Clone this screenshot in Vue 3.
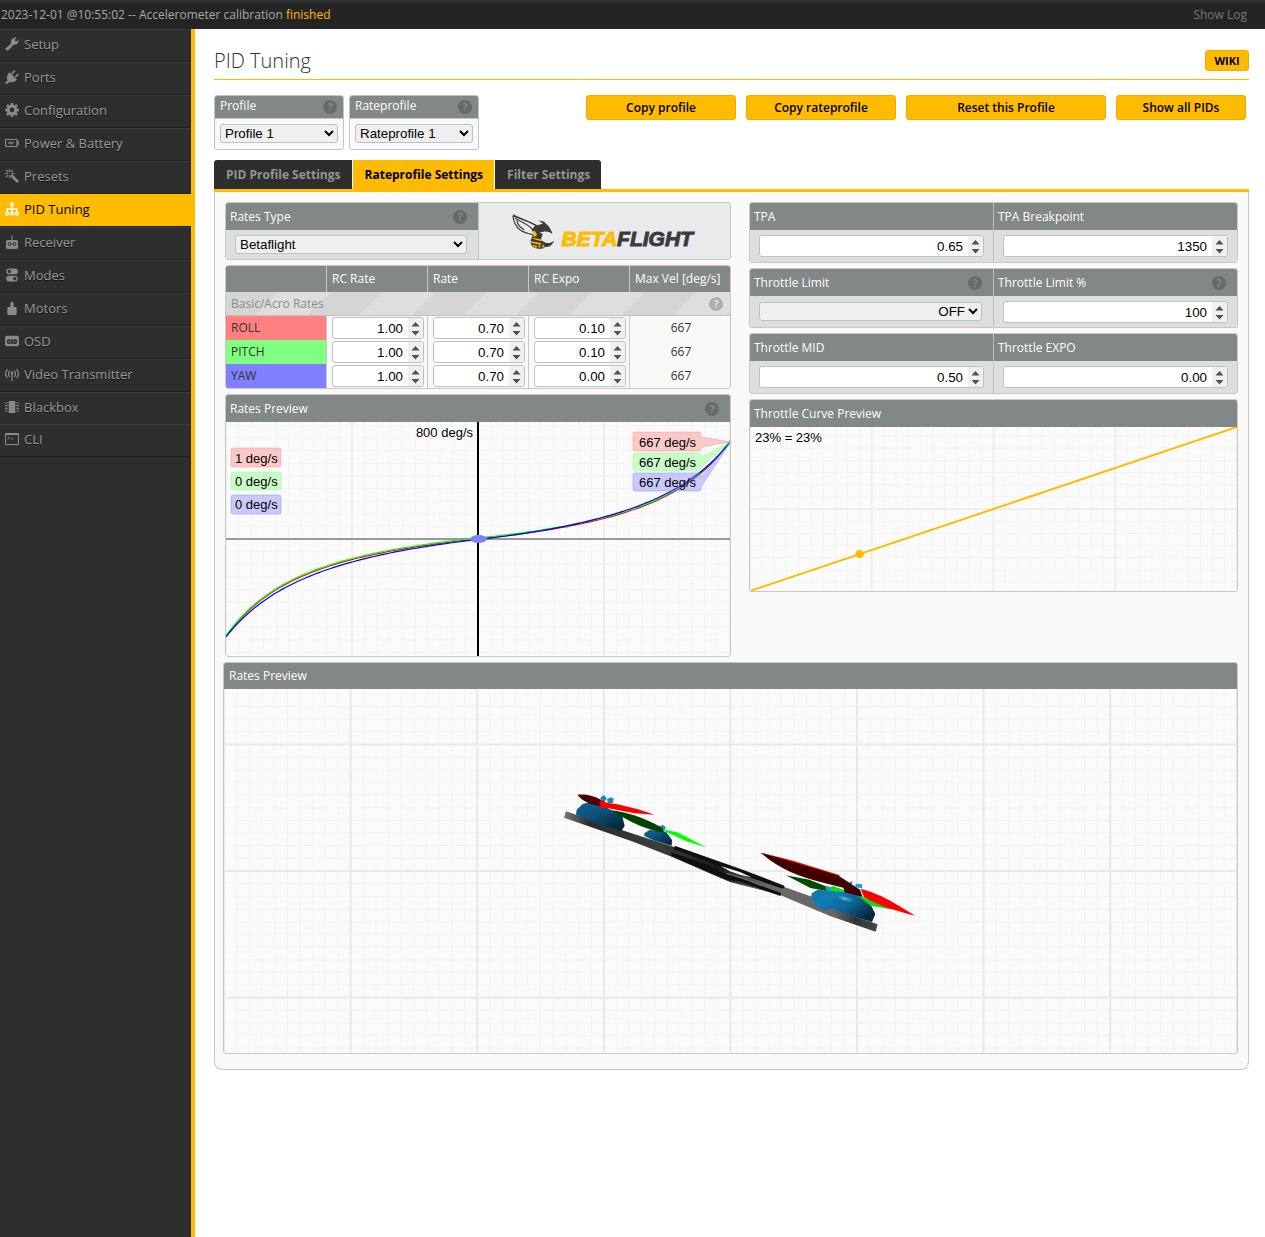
<script setup>
import { ref } from 'vue'

const nav = [
  { id: 'setup', label: 'Setup' },
  { id: 'ports', label: 'Ports' },
  { id: 'config', label: 'Configuration' },
  { id: 'power', label: 'Power & Battery' },
  { id: 'presets', label: 'Presets' },
  { id: 'pid', label: 'PID Tuning' },
  { id: 'receiver', label: 'Receiver' },
  { id: 'modes', label: 'Modes' },
  { id: 'motors', label: 'Motors' },
  { id: 'osd', label: 'OSD' },
  { id: 'vtx', label: 'Video Transmitter' },
  { id: 'blackbox', label: 'Blackbox' },
  { id: 'cli', label: 'CLI' },
]
const activeNav = ref('pid')

const tabs = ['PID Profile Settings', 'Rateprofile Settings', 'Filter Settings']
const activeTab = ref(1)

const axes = ref([
  { name: 'ROLL', cls: 'roll', rc: '1.00', rate: '0.70', expo: '0.10', max: 667 },
  { name: 'PITCH', cls: 'pitch', rc: '1.00', rate: '0.70', expo: '0.10', max: 667 },
  { name: 'YAW', cls: 'yaw', rc: '1.00', rate: '0.70', expo: '0.00', max: 667 },
])

const throttleRows = ref([
  [
    { id: 'tpa', label: 'TPA', value: '0.65', step: '0.01' },
    { id: 'tpa-breakpoint', label: 'TPA Breakpoint', value: '1350', step: '10' },
  ],
  [
    { id: 'throttle-limit', label: 'Throttle Limit', options: ['OFF', 'SCALE', 'CLIP'], value: 'OFF', help: true },
    { id: 'throttle-limit-pct', label: 'Throttle Limit %', value: '100', step: '1', help: true },
  ],
  [
    { id: 'throttle-mid', label: 'Throttle MID', value: '0.50', step: '0.01' },
    { id: 'throttle-expo', label: 'Throttle EXPO', value: '0.00', step: '0.01' },
  ],
])

// Stick deflection (-1..1) to angular velocity in deg/s
function velocity(stick, rcRate, rate, expo) {
  const a = Math.abs(stick)
  const c = stick * a ** 3 * expo + stick * (1 - expo)
  return (200 * rcRate * c) / (1 - a * rate)
}
function curve(axis, shift) {
  const pts = []
  for (let i = 0; i <= 126; i++) {
    const s = (i / 126) * 2 - 1
    const v = velocity(s, +axis.rc, +axis.rate, +axis.expo)
    pts.push(`${i * 4},${(117 - (v / 800) * 117 + shift).toFixed(1)}`)
  }
  return pts.join(' ')
}
</script>

<template>
  <div class="app">
    <header class="log">
      <span>2023-12-01 @10:55:02 -- Accelerometer calibration <em>finished</em></span>
      <a href="#" class="show-log">Show Log</a>
    </header>

    <div class="main">
      <nav class="sidebar">
        <ul>
          <li v-for="n in nav" :key="n.id">
            <a href="#" :class="{ active: n.id === activeNav }" @click.prevent="activeNav = n.id">
              <svg class="icon" viewBox="0 0 14 14" aria-hidden="true">
                <path v-if="n.id === 'setup'" fill="currentColor" d="M.7 11.200 6 6.400C5.300 3.600 7.300.700 10.500.2l1.200.2-1.900 2.300.3 1.300 1.500.4L13.700 2.300c.6 3.200-1.900 6-5 5.400L3.300 13.200c-1.200 1-3.600-.9-2.600-2z" />
                <g v-else-if="n.id === 'ports'">
                  <path d="M6.800 3.800 9.800.7M10.200 7.200l3.200-3.200M.5 13.400l3-2.600" stroke="currentColor" stroke-width="1.700" fill="none" />
                  <path fill="currentColor" d="m4.600 2.200 7.200 7.200c-1.800 2.400-4.700 3.400-7.500 2.300L2.300 10.200C1.300 7.400 2.200 4 4.600 2.200zM1 12l3-1 .6 1.500L2 13.800z" />
                </g>
                <g v-else-if="n.id === 'config'">
                  <circle cx="7" cy="7" r="3.900" fill="none" stroke="currentColor" stroke-width="3" />
                  <path d="M7 0v2M7 12v2M0 7h2M12 7h2M2 2l1.500 1.500M10.500 10.500 12 12M2 12l1.500-1.500M10.500 3.500 12 2" stroke="currentColor" stroke-width="2.600" />
                </g>
                <g v-else-if="n.id === 'power'" fill="none" stroke="currentColor">
                  <path d="M.5 3.500h11.500v7H.5z" stroke-width="1.200" />
                  <path d="M13.200 5v4" stroke-width="1.500" />
                  <path d="m3 7.500 2.500-1.500 1 2L8.500 6" stroke-width="1.200" />
                </g>
                <g v-else-if="n.id === 'presets'" stroke="currentColor" fill="none">
                  <path d="m6 6 7 7" stroke-width="2.600" />
                  <path d="M4.500 0v3.200M0 4.500h3.200M1 1l2.200 2.200M8 1 6 3M1 8l2.200-2.200M9.500 4.500H6.500M4.500 9V6.500" stroke-width="1.100" />
                </g>
                <g v-else-if="n.id === 'pid'" stroke="currentColor" fill="none" stroke-width="1.400">
                  <circle cx="7" cy="2.200" r="1.500" />
                  <circle cx="2.200" cy="11.600" r="1.500" /><circle cx="7" cy="11.600" r="1.500" /><circle cx="11.800" cy="11.600" r="1.500" />
                  <path d="M7 3.700v6.400M2.200 10V7h9.600v3" />
                </g>
                <g v-else-if="n.id === 'receiver'">
                  <path fill="currentColor" d="M6.500 0h1v5h4.500l1 1.500V13l-1 1H2l-1-1V6.500L2 5h4.500z" />
                  <circle cx="4.500" cy="9" r="1.500" fill="currentColor" stroke="#2e2e2e" /><circle cx="9.500" cy="9" r="1.500" fill="currentColor" stroke="#2e2e2e" />
                </g>
                <g v-else-if="n.id === 'modes'">
                  <rect x="1.200" y=".5" width="11.600" height="5.800" rx="2.900" fill="currentColor" /><rect x="1.200" y="7.700" width="11.600" height="5.800" rx="2.900" fill="currentColor" />
                  <circle cx="4.300" cy="3.400" r="1.700" fill="#2e2e2e" /><circle cx="9.700" cy="10.600" r="1.700" fill="#2e2e2e" />
                </g>
                <path v-else-if="n.id === 'motors'" fill="currentColor" d="m7 0 1.700 2.500V6H11l.6.6v6.800l-.6.6H3l-.6-.6V6.600L3 6h2.300V2.500z" />
                <g v-else-if="n.id === 'osd'">
                  <rect y="1.800" width="14" height="10.400" rx="2" fill="currentColor" />
                  <text x="7" y="8.800" font-size="5" font-weight="700" text-anchor="middle" fill="#2e2e2e">OSD</text>
                </g>
                <g v-else-if="n.id === 'vtx'" stroke="currentColor" fill="none" stroke-width="1.200">
                  <path d="M2.500 2.200c-2.400 2.800-2.400 6.200 0 9M11.500 2.200c2.400 2.800 2.400 6.200 0 9M4.700 3.500c-1.500 2-1.500 4.400 0 6.400M9.300 3.500c1.500 2 1.500 4.400 0 6.400M7 6.500V14" />
                  <circle cx="7" cy="6" r=".8" />
                </g>
                <g v-else-if="n.id === 'blackbox'">
                  <path fill="currentColor" d="M3.700 1h6.600v12H3.700z" />
                  <path d="M0 3h2.600M0 5.700h2.600M0 8.400h2.600M0 11h2.600M11.400 3H14M11.400 5.700H14M11.400 8.400H14M11.400 11H14" stroke="currentColor" stroke-width="1.200" />
                </g>
                <g v-else stroke="currentColor" fill="none">
                  <path d="M.5 1.500h13v11H.5z" /><path d="M.5 2.500h13" />
                  <path d="m2.500 4.500 2 1.300-2 1.300M5.500 7h2.500" stroke-width=".8" />
                </g>
              </svg>
              <span>{{ n.label }}</span>
            </a>
          </li>
        </ul>
      </nav>

      <main class="content">
        <div class="title-row">
          <h1>PID Tuning</h1>
          <button type="button" class="wiki">WIKI</button>
        </div>

        <div class="toolbar">
          <div class="selector">
            <div class="head"><label for="profile">Profile</label><span class="help">?</span></div>
            <div class="selector-body"><select id="profile"><option>Profile 1</option><option>Profile 2</option><option>Profile 3</option></select></div>
          </div>
          <div class="selector">
            <div class="head"><label for="rateprofile">Rateprofile</label><span class="help">?</span></div>
            <div class="selector-body"><select id="rateprofile"><option>Rateprofile 1</option><option>Rateprofile 2</option></select></div>
          </div>
          <div class="actions">
            <button type="button">Copy profile</button>
            <button type="button">Copy rateprofile</button>
            <button type="button" class="wide">Reset this Profile</button>
            <button type="button" class="narrow">Show all PIDs</button>
          </div>
        </div>

        <div class="tabs" role="tablist">
          <button v-for="(t, i) in tabs" :key="t" type="button" role="tab" :aria-selected="i === activeTab" :class="{ active: i === activeTab }" @click="activeTab = i">{{ t }}</button>
        </div>

        <section class="panel">
          <div class="columns">
            <div class="left">
              <div class="box split">
                <div class="cell">
                  <div class="head"><label for="rates-type">Rates Type</label><span class="help inset">?</span></div>
                  <div class="cell-body rates-type"><select id="rates-type"><option>Betaflight</option><option>Raceflight</option><option>KISS</option><option>Actual</option><option>Quick</option></select></div>
                </div>
                <div class="cell logo">
                  <svg viewBox="0 0 250 56" role="img" aria-label="Betaflight">
                    <g transform="translate(-4 -8) scale(.33333)">
                      <g fill="none" stroke="#3c3c3b" stroke-width="3.500" stroke-linejoin="round">
                        <path d="M112 62c15 7 45 14 72 30M112 62c2 18 10 34 22 43M118 70c18 10 38 16 52 32M134 105c12 8 24 11 38 14M124 76c2 12 10 22 22 28" />
                      </g>
                      <path fill="#3c3c3b" d="m112 58 44 19 28 14 18-5c-4-5-8-7-14-9 14 0 20 3 24 10 8 5 14 14 19 30-10-7-18-9-30-6-10 3-18 2-25 7l-8-14 11-12-21-10-44-18z" />
                      <path fill="#3c3c3b" d="m172 120 16-10 14 8-6 15c10 12 24 16 40 4-6 14-15 20-28 19 0 4-10 6-20 5-18-2-25-12-22-26z" />
                      <path fill="#ffbb00" d="m170 110 8-3 7 12-9 8zM172 128l28 6-2 5-24-7zM166 139l32 6-4 4-29-6zM168 149l18 4-5 6zM188 153l8-3-4 10zM202 147l6 9-8 2z" />
                    </g>
                    <text x="82" y="43" class="brand"><tspan fill="#ffbb00" stroke="#ffbb00">BETA</tspan><tspan fill="#3c3c3b" stroke="#3c3c3b">FLIGHT</tspan></text>
                  </svg>
                </div>
              </div>

              <div class="box">
                <table class="rates">
                  <thead>
                    <tr><th class="axis"></th><th>RC Rate</th><th>Rate</th><th>RC Expo</th><th>Max Vel [deg/s]</th></tr>
                  </thead>
                  <tbody>
                    <tr><td colspan="5" class="group"><div><span>Basic/Acro Rates</span><span class="help light">?</span></div></td></tr>
                    <tr v-for="a in axes" :key="a.name">
                      <th scope="row" :class="a.cls">{{ a.name }}</th>
                      <td><input v-model="a.rc" type="number" step="0.01" :aria-label="a.name + ' RC Rate'" /></td>
                      <td><input v-model="a.rate" type="number" step="0.01" :aria-label="a.name + ' Rate'" /></td>
                      <td><input v-model="a.expo" type="number" step="0.01" :aria-label="a.name + ' RC Expo'" /></td>
                      <td class="max">{{ a.max }}</td>
                    </tr>
                  </tbody>
                </table>
              </div>

              <div class="box">
                <div class="head"><span>Rates Preview</span><span class="help inset">?</span></div>
                <svg class="plot" viewBox="0 0 504 234">
                  <defs>
                    <pattern id="g1" width="126" height="126" patternUnits="userSpaceOnUse" patternTransform="translate(0 -9)">
                      <path v-for="i in 9" :key="i" :d="`M${i * 12.6} 0V126M0 ${i * 12.6}H126`" stroke="#f3f3f3" />
                      <path d="M0 0V126M0 0H126M126 0V126M0 126H126" stroke="#eee" stroke-width="2" />
                    </pattern>
                  </defs>
                  <rect width="504" height="234" fill="url(#g1)" />
                  <path d="M0 117H504" stroke="#999" stroke-width="2" />
                  <path d="M252 0V234" stroke="#000" stroke-width="2" />
                  <g fill="none" stroke-width="1.200">
                    <polyline :points="curve(axes[0], 0)" stroke="#f00" />
                    <polyline :points="curve(axes[1], -1)" stroke="#0f0" />
                    <polyline :points="curve(axes[2], 0.500)" stroke="#00f" />
                  </g>
                  <ellipse cx="252.500" cy="117" rx="8.500" ry="4" fill="#8080ff" />
                  <g class="tag-red">
                    <rect x="5" y="26" width="50" height="19" rx="2" />
                    <path d="M409 10h64q2 0 2 2v3l29 5-29 5v2q0 2-2 2h-64q-2 0-2-2V12q0-2 2-2z" />
                  </g>
                  <g class="tag-green">
                    <rect x="5" y="50" width="50" height="18" rx="2" />
                    <path d="M409 31h64q2 0 2 2v2l29-15-29 25v2q0 2-2 2h-64q-2 0-2-2V33q0-2 2-2z" />
                  </g>
                  <g class="tag-blue">
                    <rect x="5" y="73" width="50" height="19" rx="2" />
                    <path d="M409 51h64q2 0 2 2v2l29-34-29 44v2q0 2-2 2h-64q-2 0-2-2V53q0-2 2-2z" />
                  </g>
                  <g class="plot-text">
                    <text x="247" y="15" text-anchor="end">800 deg/s</text>
                    <text x="9" y="41">1 deg/s</text>
                    <text x="9" y="64">0 deg/s</text>
                    <text x="9" y="87">0 deg/s</text>
                    <text x="413" y="25">667 deg/s</text>
                    <text x="413" y="45">667 deg/s</text>
                    <text x="413" y="65">667 deg/s</text>
                  </g>
                </svg>
              </div>
            </div>

            <div class="right">
              <div v-for="(row, r) in throttleRows" :key="r" class="box split">
                <div v-for="f in row" :key="f.id" class="cell">
                  <div class="head"><label :for="f.id">{{ f.label }}</label><span v-if="f.help" class="help inset">?</span></div>
                  <div class="cell-body" :class="{ short: f.help }">
                    <select v-if="f.options" :id="f.id" v-model="f.value" class="end"><option v-for="o in f.options" :key="o">{{ o }}</option></select>
                    <input v-else :id="f.id" v-model="f.value" type="number" :step="f.step" />
                  </div>
                </div>
              </div>

              <div class="box">
                <div class="head"><span>Throttle Curve Preview</span></div>
                <svg class="plot" viewBox="0 0 487 164">
                  <defs>
                    <pattern id="g2" width="121.750" height="121.750" patternUnits="userSpaceOnUse" patternTransform="translate(0 -39.750)">
                      <path v-for="i in 9" :key="i" :d="`M${i * 12.175} 0V122M0 ${i * 12.175}H122`" stroke="#f3f3f3" />
                      <path d="M0 0V122M0 0H122M121.750 0V122M0 121.750H122" stroke="#eee" stroke-width="2" />
                    </pattern>
                  </defs>
                  <rect width="487" height="164" fill="url(#g2)" />
                  <path d="M0 164 487 0" stroke="#ffbb00" stroke-width="2" />
                  <circle cx="109.500" cy="127" r="4" fill="#ffbb00" />
                  <text x="5" y="15" class="plot-text">23% = 23%</text>
                </svg>
              </div>
            </div>
          </div>

          <div class="box model">
            <div class="head"><span>Rates Preview</span></div>
            <svg class="plot" viewBox="0 0 1013 364">
              <defs>
                <pattern id="g3" width="126.600" height="126.600" patternUnits="userSpaceOnUse" patternTransform="translate(0 55.400)">
                  <path v-for="i in 9" :key="i" :d="`M${i * 12.66} 0V127M0 ${i * 12.66}H127`" stroke="#f3f3f3" />
                  <path d="M0 0V127M0 0H127M126.600 0V127M0 126.600H127" stroke="#e9e9e9" stroke-width="2" />
                </pattern>
                <linearGradient id="beam" x1="0" x2="1"><stop offset="0" stop-color="#777" /><stop offset=".08" stop-color="#2c2c2c" /><stop offset=".3" stop-color="#3c3c3c" /><stop offset=".5" stop-color="#1c1c1c" /><stop offset=".65" stop-color="#6a6a6a" /><stop offset=".86" stop-color="#666" /><stop offset=".93" stop-color="#333" /><stop offset="1" stop-color="#484848" /></linearGradient>
                <linearGradient id="bell" x1="0" y1="0" x2=".9" y2="1"><stop offset="0" stop-color="#0d6797" /><stop offset=".45" stop-color="#0b5078" /><stop offset="1" stop-color="#032231" /></linearGradient>
                <linearGradient id="bell2" x1="0" y1="0" x2="1" y2=".6"><stop offset="0" stop-color="#0e76ac" /><stop offset=".3" stop-color="#0f7db5" /><stop offset=".65" stop-color="#0c6593" /><stop offset="1" stop-color="#042a3e" /></linearGradient>
                <radialGradient id="shine"><stop offset="0" stop-color="#7fc0e0" /><stop offset="1" stop-color="#0f7db5" stop-opacity="0" /></radialGradient>
              </defs>
              <rect width="1013" height="364" fill="url(#g3)" />
              <g transform="translate(326 91) scale(.33333)">
                <path fill="url(#beam)" d="m48 94 110 37 112 37 100 32 130 52 205 70 85 30 100 49 93 32-6 22-137-47-150-63-150-39-75-32-100-44-115-45L42 113z" />
                <path fill="#101010" d="m374 197 196 69 133 51v8l-10 0-125-44-196-73zM364 217l104 36 40 14-6 7 68 21 124 44-3 9-121-43-35-5-70-29-101-43z" />
                <path fill="#fbfbfb" d="m512 258 58 18 34 16-34-8-30-10z" />
                <path fill="none" stroke="#666" stroke-width="4" d="m530 280 60 18 45 19" />
                <path fill="url(#bell)" d="m120 66 45 14 52 29 7 29-10 15-70-22-66-27 2-15 18-17z" />
                <path fill="url(#bell)" d="m283 160 15-10 50 5 18 25-1 17-55-16-27-13z" />
                <path fill="#128ac5" d="m150 54 12-9 8 10-8 14zM171 56l14-4 6 5-2 12-16 0zM328 139l10-4 9 6-3 10-16-3zM320 141h5v12h-5z" />
                <path fill="#4f0000" d="M82 44c24-2 50 2 74 18l-2 17c-28-5-55-13-72-35z" />
                <path fill="red" d="m152 58 18 10 32 5 62 15 50 16-60-4-88-17-16 2z" />
                <path fill="#004400" d="M182 91c50 5 92 20 154 52l8 15c-45-4-104-31-162-67z" />
                <path fill="#00ff00" d="m344 149 38 8 89 46-64-20-63-29z" />
                <path fill="#004b00" d="m708 286 70 13 76 30-8 7-65-12z" />
                <path fill="#0fdd12" d="m830 325 20-7 68 26 120 44-65-9-143-48z" />
                <path fill="url(#bell2)" d="m785 340 18-11 65 6 48 4 42 27 18 36-10 24-60-18-55-20-20-2-10 5-30-19 5-8-13-5z" />
                <ellipse cx="885" cy="356" rx="34" ry="10" transform="rotate(15 885 356)" fill="url(#shine)" />
                <path fill="#15a0e4" d="m898 306 9-3-1 12-7-2zM917 311l19 1v13l-20-3zM825 322l10-4 8 10-10 6z" />
                <path fill="#0fdd12" d="m922 346 20 6 88 34-10 2-60-12z" />
                <path fill="red" d="m632 217 100 26 138 43-10 8zM932 326c55 15 90 35 164 81-58-14-108-29-154-56z" />
                <path fill="#410000" d="m632 218 124 36 110 33 64 42 8 22-54-14-4-14-60-15c-70-16-135-42-188-90z" />
              </g>
            </svg>
          </div>
        </section>
      </main>
    </div>
  </div>
</template>

<style>
body {
  background: #fff;
}
</style>

<style scoped>
* {
  box-sizing: border-box;
}
.app {
  display: flex;
  flex-direction: column;
  min-height: 100vh;
  font: 12px/18px "Open Sans", "Noto Sans", sans-serif;
  color: #333;
}
.log {
  display: flex;
  justify-content: space-between;
  align-items: center;
  height: 29px;
  padding: 0 18px 2px 1px;
  background: #242424;
  border-top: 2px solid #333;
  color: #a8a8a8;
}
.log em {
  font-style: normal;
  color: #ffbb00;
}
.show-log {
  color: #777;
  text-decoration: none;
}
.main {
  display: flex;
  flex: 1;
}
.sidebar {
  flex: none;
  width: 195px;
  background: #2e2e2e;
  border-right: 4px solid #ffbb00;
}
.sidebar ul {
  margin: 0;
  padding: 0;
  list-style: none;
}
.sidebar li {
  border-bottom: 1px solid #202020;
}
.sidebar li:nth-last-child(2) {
  border-bottom: 0;
}
.sidebar a {
  display: flex;
  align-items: center;
  gap: 5px;
  height: 32px;
  padding: 0 0 3px 5px;
  border-top: 1px solid #3b3b3b;
  color: #999;
  font-size: 13px;
  text-decoration: none;
  text-shadow: 0 1px #111;
}
.sidebar a.active {
  background: #ffbb00;
  border-color: #ffbb00;
  color: #000;
  text-shadow: none;
}
.icon {
  width: 14px;
  height: 14px;
  color: #8a8a8a;
}
.active .icon {
  color: #fff;
}
.content {
  flex: 1;
  min-width: 0;
  padding: 16px 16px 20px 19px;
}
.title-row {
  display: flex;
  justify-content: space-between;
  align-items: center;
  height: 35px;
  padding-bottom: 3px;
  border-bottom: 1px solid #ffbb00;
}
h1 {
  margin: 0;
  font-size: 20px;
  line-height: 30px;
  font-weight: 300;
}
button {
  font: 600 12px/16px "Open Sans", sans-serif;
  color: #000;
  cursor: pointer;
}
.wiki,
.actions button {
  background: #ffbb00;
  border: 1px solid #e8ae03;
  border-radius: 3px;
  padding: 0;
}
.wiki {
  width: 44px;
  height: 21px;
  font-size: 11px;
  font-weight: 700;
}
.toolbar {
  display: flex;
  gap: 5px;
  margin-top: 15px;
}
.selector {
  width: 130px;
  border: 1px solid #c4c4c4;
  border-radius: 3px;
  background: #f9f9f9;
  overflow: hidden;
}
.head {
  display: flex;
  justify-content: space-between;
  align-items: center;
  height: 27px;
  padding: 0 5px 0 4px;
  background: #828885;
  color: #fff;
}
.selector .head {
  height: 23px;
  padding: 0 6px 2px 5px;
  border-bottom: 1px solid #c4c4c4;
}
.selector .help {
  position: relative;
  top: 1px;
}
.selector-body {
  padding: 5px 5px 6px;
}
.help {
  width: 14px;
  height: 14px;
  border-radius: 7px;
  background: #666b69;
  color: #858b88;
  font: 700 11px/14px "Open Sans", sans-serif;
  text-align: center;
}
.help.inset {
  margin-right: 6px;
}
.help.light {
  background: #aeaeae;
  color: #e0e0e0;
}
select,
input {
  display: block;
  width: 100%;
  font-family: "Liberation Sans", Arial, sans-serif;
  color: #000;
  border: 1px solid #c0c0c0;
  border-radius: 3px;
}
select {
  height: 19px;
  padding: 0;
  background: #efefef;
}
select.end {
  width: calc(100% - 2px);
  margin-top: 1px;
  text-align-last: right;
}
input {
  height: 22px;
  padding: 0;
  background: #fff;
  text-align: right;
}
input::-webkit-inner-spin-button {
  appearance: none;
  opacity: 1;
  width: 15px;
  height: 20px;
  margin-left: 5px;
  background: #f0f0f0 url("data:image/svg+xml,%3Csvg xmlns='http://www.w3.org/2000/svg' width='15' height='20'%3E%3Cpath d='M7.500 4 11.500 8.500h-8zM7.500 17.500 3.500 13h8z' fill='%23505050'/%3E%3C/svg%3E") no-repeat;
}
.actions {
  display: flex;
  gap: 10px;
  margin: 0 3px 0 auto;
}
.actions button {
  width: 150px;
  height: 25px;
}
.actions .wide {
  width: 200px;
}
.actions .narrow {
  width: 130px;
}
.tabs {
  display: flex;
  gap: 1px;
  margin-top: 10px;
  border-bottom: 3px solid #ffbb00;
}
.tabs button {
  height: 29px;
  padding: 0 11px 0 12px;
  border: 0;
  background: #2e2e2e;
  color: #949494;
  font-weight: 700;
}
.tabs button:first-child {
  border-top-left-radius: 3px;
}
.tabs button:last-child {
  border-top-right-radius: 3px;
}
.tabs .active {
  background: #ffbb00;
  color: #000;
}
.panel {
  padding: 10px 10px 15px 8px;
  border: 1px solid #c8c8c8;
  border-top: 0;
  border-radius: 0 0 8px 8px;
  background: #f9f9f9;
}
.columns {
  display: grid;
  grid-template-columns: 506fr 489fr;
  gap: 18px;
  margin: 0 0 5px 2px;
}
.left,
.right {
  display: flex;
  flex-direction: column;
  gap: 5px;
  min-width: 0;
}
.box {
  border: 1px solid #c8c8c8;
  border-radius: 3px;
  overflow: hidden;
  background: #fbfbfb;
}
.model .head {
  height: 26px;
  padding-left: 5px;
}
.split {
  display: grid;
  grid-template-columns: 1fr 1fr;
}
.right .split {
  grid-template-columns: 243fr 244fr;
}
.cell {
  min-width: 0;
  background: #dedede;
}
.cell + .cell {
  border-left: 1px solid #c0c0c0;
}
.cell-body {
  padding: 5px 9px;
}
.right .cell-body {
  height: 32px;
}
.right .cell-body.short {
  height: 31px;
}
.cell-body.rates-type {
  padding-right: 11px;
}
.logo {
  background: #e9eaec;
}
.logo svg {
  display: block;
  width: 100%;
  height: 56px;
}
.brand {
  font: italic 700 21px "Liberation Sans", Arial, sans-serif;
  stroke-width: 1px;
}
.rates {
  width: 100%;
  table-layout: fixed;
  border-collapse: separate;
  border-spacing: 0;
}
.rates th,
.rates td {
  padding: 0 3px 0 5px;
  font-weight: 400;
  text-align: left;
}
.rates thead th {
  height: 26px;
  background: #828885;
  color: #fff;
  white-space: nowrap;
}
.rates .axis {
  width: 100px;
}
.rates th + th,
.rates td {
  border-left: 1px solid #c8c8c8;
}
.rates tbody tr {
  height: 24px;
}
.rates td {
  background: #f9f9f9;
}
.rates td.max {
  text-align: center;
}
.rates td.group {
  padding: 0;
  border-left: 0;
  border-bottom: 1px solid #c0c0c0;
  background: repeating-linear-gradient(135deg, #d5d5d5 0 37px, #dedede 37px 74px);
  color: #8c8c8c;
}
.group div {
  display: flex;
  justify-content: space-between;
  align-items: center;
  padding: 0 7px 0 5px;
}
.roll {
  background: #ff8080;
}
.pitch {
  background: #80ff80;
}
.yaw {
  background: #8080ff;
}
.plot {
  display: block;
  width: 100%;
  height: auto;
}
.plot-text {
  font: 13px "Liberation Sans", Arial, sans-serif;
  fill: #000;
}
.tag-red {
  fill: rgba(255, 128, 128, 0.4);
  stroke: rgba(255, 128, 128, 0.4);
}
.tag-green {
  fill: rgba(128, 255, 128, 0.4);
  stroke: rgba(128, 255, 128, 0.4);
}
.tag-blue {
  fill: rgba(128, 128, 255, 0.4);
  stroke: rgba(128, 128, 255, 0.4);
}
</style>
